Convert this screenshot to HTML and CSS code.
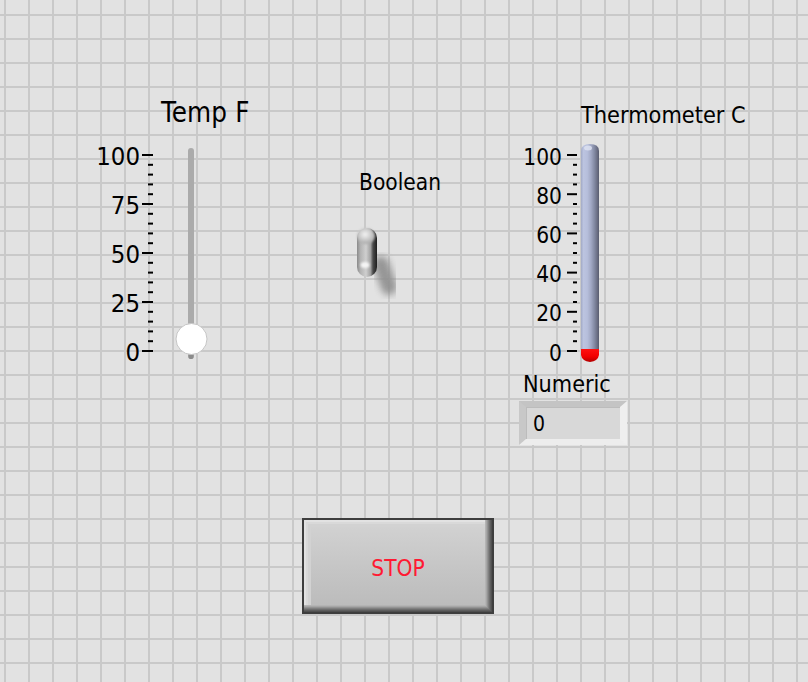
FILE: index.html
```html
<!DOCTYPE html>
<html>
<head>
<meta charset="utf-8">
<link rel="stylesheet" href="styles.css">
</head>
<body>
<main class="panel">
  <section class="ctl slider-ctl">
    <div class="label label-temp">Temp F</div>
    <svg class="scale-svg slider-svg" width="130" height="230" viewBox="90 135 130 230">
      <g class="scale-text slider-text" text-anchor="end">
        <text x="140" y="164.5">100</text>
        <text x="140" y="213.5">75</text>
        <text x="140" y="262.5">50</text>
        <text x="140" y="311.5">25</text>
        <text x="140" y="360.5">0</text>
      </g>
      <g fill="#000">
        <rect x="142" y="154" width="11" height="2"/>
        <rect x="142" y="203" width="11" height="2"/>
        <rect x="142" y="252" width="11" height="2"/>
        <rect x="142" y="301" width="11" height="2"/>
        <rect x="142" y="350" width="11" height="2"/>
        <rect x="148" y="163.8" width="5" height="2"/><rect x="148" y="173.6" width="5" height="2"/><rect x="148" y="183.4" width="5" height="2"/><rect x="148" y="193.2" width="5" height="2"/>
        <rect x="148" y="212.8" width="5" height="2"/><rect x="148" y="222.6" width="5" height="2"/><rect x="148" y="232.4" width="5" height="2"/><rect x="148" y="242.2" width="5" height="2"/>
        <rect x="148" y="261.8" width="5" height="2"/><rect x="148" y="271.6" width="5" height="2"/><rect x="148" y="281.4" width="5" height="2"/><rect x="148" y="291.2" width="5" height="2"/>
        <rect x="148" y="310.8" width="5" height="2"/><rect x="148" y="320.6" width="5" height="2"/><rect x="148" y="330.4" width="5" height="2"/><rect x="148" y="340.2" width="5" height="2"/>
      </g>
      <rect x="188" y="148" width="6" height="211" rx="3" fill="#ababab"/>
      <rect x="188.5" y="350" width="5" height="9" rx="2" fill="#8c8c8c"/>
      <circle cx="191.5" cy="339" r="15.5" fill="#ffffff" stroke="#c6c6c6" stroke-width="1"/>
    </svg>
  </section>

  <section class="ctl bool-ctl">
    <div class="label label-bool">Boolean</div>
    <svg class="toggle-svg" width="60" height="90" viewBox="345 215 60 90">
      <defs>
        <filter id="blur3" x="-80%" y="-50%" width="260%" height="200%"><feGaussianBlur stdDeviation="3.5"/></filter>
        <filter id="blur1" x="-50%" y="-50%" width="200%" height="200%"><feGaussianBlur stdDeviation="1.2"/></filter>
        <linearGradient id="lever" x1="0" y1="0" x2="1" y2="0">
          <stop offset="0" stop-color="#8a8a8a"/>
          <stop offset="0.18" stop-color="#b4b4b4"/>
          <stop offset="0.45" stop-color="#cfcfcf"/>
          <stop offset="0.68" stop-color="#a0a0a0"/>
          <stop offset="0.8" stop-color="#4a4a4a"/>
          <stop offset="1" stop-color="#1e1e1e"/>
        </linearGradient>
        <radialGradient id="cap" cx="0.45" cy="0.4" r="0.6">
          <stop offset="0" stop-color="#f4f4f4"/>
          <stop offset="0.6" stop-color="#c8c8c8"/>
          <stop offset="1" stop-color="#a8a8a8"/>
        </radialGradient>
      </defs>
      <line x1="381" y1="264" x2="389" y2="287" stroke="#8e8e8e" stroke-width="16" stroke-linecap="round" filter="url(#blur3)" opacity="0.9"/>
      <rect x="357" y="228" width="20" height="49" rx="10" fill="url(#lever)"/>
      <ellipse cx="366" cy="236" rx="9" ry="8" fill="url(#cap)" filter="url(#blur1)"/>
      <ellipse cx="365" cy="265" rx="4.5" ry="3" fill="#f4f4f4" filter="url(#blur1)"/>
    </svg>
  </section>

  <section class="ctl therm-ctl">
    <div class="label label-therm">Thermometer C</div>
    <svg class="scale-svg therm-svg" width="100" height="230" viewBox="515 138 100 230">
      <defs>
        <linearGradient id="tube" x1="0" y1="0" x2="1" y2="0">
          <stop offset="0" stop-color="#a2aac6"/>
          <stop offset="0.14" stop-color="#bcc4e0"/>
          <stop offset="0.35" stop-color="#b6bedb"/>
          <stop offset="0.55" stop-color="#a2a9c5"/>
          <stop offset="0.75" stop-color="#8289a2"/>
          <stop offset="0.9" stop-color="#6a6e84"/>
          <stop offset="1" stop-color="#585c6e"/>
        </linearGradient>
        <linearGradient id="bulb" x1="0" y1="0" x2="0" y2="1">
          <stop offset="0" stop-color="#ff1010"/>
          <stop offset="0.6" stop-color="#f00000"/>
          <stop offset="1" stop-color="#b00000"/>
        </linearGradient>
      </defs>
      <g class="scale-text therm-text" text-anchor="end">
        <text x="562" y="164.5">100</text>
        <text x="562" y="203.7">80</text>
        <text x="562" y="242.9">60</text>
        <text x="562" y="282.1">40</text>
        <text x="562" y="321.3">20</text>
        <text x="562" y="360.5">0</text>
      </g>
      <g fill="#000">
        <rect x="567" y="154" width="10" height="2"/>
        <rect x="567" y="193.2" width="10" height="2"/>
        <rect x="567" y="232.4" width="10" height="2"/>
        <rect x="567" y="271.6" width="10" height="2"/>
        <rect x="567" y="310.8" width="10" height="2"/>
        <rect x="567" y="350" width="10" height="2"/>
        <rect x="573" y="163.8" width="4" height="2"/><rect x="573" y="173.6" width="4" height="2"/><rect x="573" y="183.4" width="4" height="2"/>
        <rect x="573" y="203" width="4" height="2"/><rect x="573" y="212.8" width="4" height="2"/><rect x="573" y="222.6" width="4" height="2"/>
        <rect x="573" y="242.2" width="4" height="2"/><rect x="573" y="252" width="4" height="2"/><rect x="573" y="261.8" width="4" height="2"/>
        <rect x="573" y="281.4" width="4" height="2"/><rect x="573" y="291.2" width="4" height="2"/><rect x="573" y="301" width="4" height="2"/>
        <rect x="573" y="320.6" width="4" height="2"/><rect x="573" y="330.4" width="4" height="2"/><rect x="573" y="340.2" width="4" height="2"/>
      </g>
      <path d="M581,352 L581,151 Q581,144 590,144 Q599,144 599,151 L599,352 Z" fill="url(#tube)"/>
      <ellipse cx="588" cy="148" rx="4" ry="2.5" fill="#dfe3f2" opacity="0.8"/>
      <path d="M581,349 L599,349 L599,355 Q598,361 590,362 Q582,361 581,355 Z" fill="url(#bulb)"/>
    </svg>
  </section>

  <section class="ctl num-ctl">
    <div class="label label-num">Numeric</div>
    <div class="num-box"><span class="num-val">0</span></div>
  </section>

  <section class="ctl stop-ctl">
    <button class="stop-btn" type="button">STOP</button>
  </section>
</main>
</body>
</html>
```
FILE: styles.css
```css
html, body {
  margin: 0;
  padding: 0;
}
body {
  width: 808px;
  height: 682px;
  overflow: hidden;
  font-family: "DejaVu Sans Condensed", "Liberation Sans", sans-serif;
  color: #000;
}
.panel {
  position: relative;
  width: 808px;
  height: 682px;
  background-color: #e2e2e2;
  background-image:
    linear-gradient(to right, #c9c9c9 2px, transparent 2px),
    linear-gradient(to bottom, #c9c9c9 2px, transparent 2px);
  background-size: 24px 24px;
  background-position: 4px 14px;
}
.ctl {
  position: absolute;
}
.label {
  line-height: 1;
  white-space: nowrap;
}
.scale-svg {
  display: block;
  position: absolute;
  overflow: visible;
}
.scale-text text {
  font-family: "DejaVu Sans Condensed", "Liberation Sans", sans-serif;
  fill: #000;
}

/* Slider */
.slider-ctl { left: 90px; top: 99px; width: 170px; height: 270px; }
.label-temp { position: absolute; left: 71px; top: 0; font-size: 27.5px; letter-spacing: 0.2px; }
.slider-svg { left: 0; top: 36px; }
.slider-text text { font-size: 25.5px; }

/* Boolean */
.bool-ctl { left: 345px; top: 171px; width: 100px; height: 135px; }
.label-bool { position: absolute; left: 14px; top: 0; font-size: 22.5px; }
.toggle-svg { position: absolute; left: 0; top: 44px; display: block; }

/* Thermometer */
.therm-ctl { left: 515px; top: 103px; width: 240px; height: 270px; }
.label-therm { position: absolute; left: 66px; top: 0; font-size: 23.3px; }
.therm-svg { left: 0; top: 35px; }
.therm-text text { font-size: 22.5px; }

/* Numeric */
.num-ctl { left: 519px; top: 372px; display: flex; flex-direction: column; align-items: flex-start; gap: 6px; }
.label-num { font-size: 23.2px; margin-left: 4px; }
.num-box {
  box-sizing: border-box;
  width: 108px;
  height: 44px;
  background: #d8d8d8;
  border-style: solid;
  border-width: 6px 7px 6px 7px;
  border-color: #c4c4c4 #efefef #ededed #c8c8c8;
  box-shadow: inset 1px 1px 0 #bcbcbc;
  display: flex;
  align-items: center;
  padding: 3px 0 0 7px;
}
.num-val { font-size: 21px; line-height: 1; }

/* Stop */
.stop-ctl { left: 302px; top: 518px; }
.stop-btn {
  box-sizing: border-box;
  width: 192px;
  height: 96px;
  margin: 0;
  padding: 5px 0 0 0;
  border: 2px solid #3e3e3e;
  border-radius: 0;
  background: linear-gradient(#d3d3d3, #c6c6c6 50%, #bababa);
  box-shadow:
    inset -1px -1px 0 #505050,
    inset -2px -2px 0 #5e5e5e,
    inset -3px -3px 0 #6e6e6e,
    inset -4px -4px 0 #808080,
    inset -5px -5px 0 #939393,
    inset -6px -6px 0 #a6a6a6,
    inset -7px -7px 0 #b4b4b4,
    inset 2px 2px 0 #e2e2e2,
    inset 4px 4px 0 #d9d9d9,
    inset 7px 7px 0 #d2d2d2;
  color: #ff1a33;
  font-family: "DejaVu Sans Condensed", "Liberation Sans", sans-serif;
  font-size: 22.5px;
  line-height: 1;
  display: flex;
  align-items: center;
  justify-content: center;
}
```
